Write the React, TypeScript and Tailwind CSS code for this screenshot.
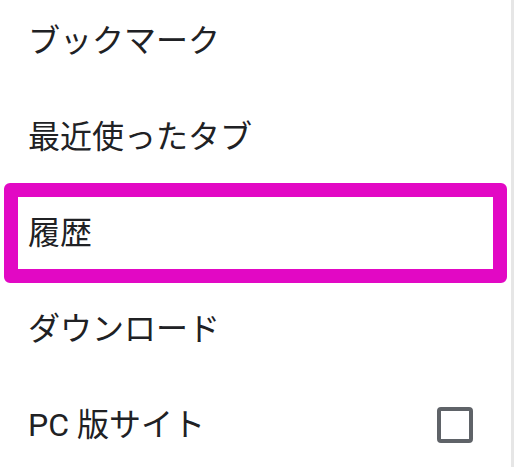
const items = [
  { label: "ブックマーク" },
  { label: "最近使ったタブ" },
  { label: "履歴", highlighted: true },
  { label: "ダウンロード" },
  { label: "PC 版サイト", checkbox: true },
];

const App = () => {
  return (
    <div className="flex h-[467px] w-[514px] overflow-hidden bg-white">
      <div
        className="flex-1 overflow-hidden"
        style={{ fontFamily: 'Roboto, "Noto Sans CJK JP", sans-serif' }}
      >
        <div className="-mt-[7px] flex flex-col">
          {items.map((item) => (
            <div
              key={item.label}
              className="relative flex h-[96px] items-center justify-between pl-[28px] pr-[38px]"
            >
              {item.highlighted && (
                <div className="absolute -top-[2px] -bottom-[2px] left-[4px] right-[4px] rounded-[6px] border-[14px] border-[#e208c4]" />
              )}
              <span className="text-[32px] leading-none text-[#202124]">
                {item.label}
              </span>
              {item.checkbox && (
                <div className="h-[36px] w-[36px] rounded-[4px] border-[4px] border-[#5f6368]" />
              )}
            </div>
          ))}
        </div>
      </div>
      <div className="w-[3px] bg-[#e6e6e6]" />
    </div>
  );
};

export default App;
